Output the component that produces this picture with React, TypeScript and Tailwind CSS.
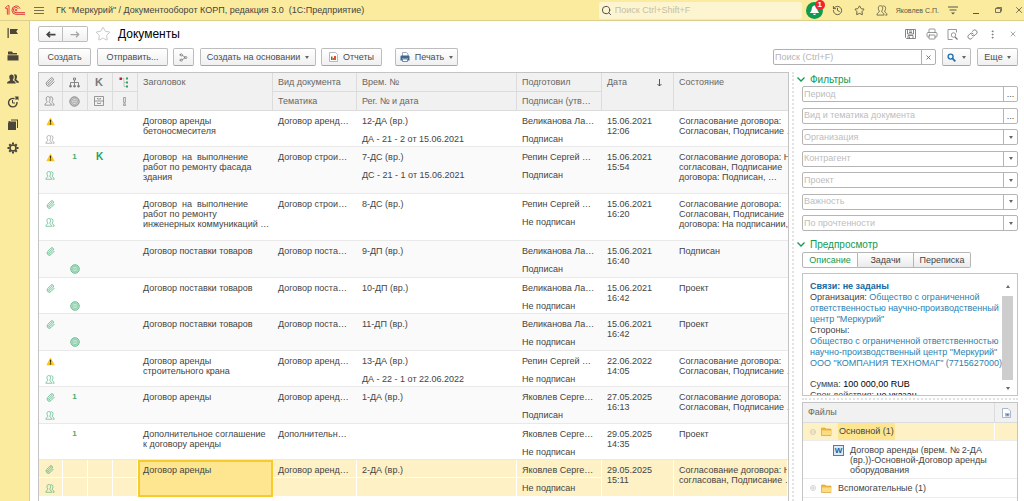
import React from 'react';
import clsx from 'clsx';
import { History, Link, MoreVertical, Paperclip, Printer, Search, Share2, Star, X } from 'lucide-react';

type Mark = 'warning' | 'clip' | 'people' | 'peopleGray' | 'seal' | 'one' | 'k';

interface DocumentRow {
  marks: [Mark?, Mark?, Mark?];
  subMarks: [Mark?, Mark?, Mark?];
  title: string[];
  kind: string;
  tempNumber?: string;
  regNumber?: string;
  author: string;
  signed: string;
  date: string;
  time: string;
  state: string[];
  tall?: boolean;
  selected?: boolean;
}

const documents: DocumentRow[] = [
  {
    marks: ['warning'],
    subMarks: ['peopleGray'],
    title: ['Договор аренды', 'бетоносмесителя'],
    kind: 'Договор аренд…',
    tempNumber: '12-ДА (вр.)',
    regNumber: 'ДА - 21 - 2 от 15.06.2021',
    author: 'Великанова Ла…',
    signed: 'Подписан',
    date: '15.06.2021',
    time: '12:06',
    state: ['Согласование договора:', 'Согласован, Подписание …'],
  },
  {
    marks: ['warning', 'one', 'k'],
    subMarks: ['people'],
    title: ['Договор  на  выполнение', 'работ по ремонту фасада', 'здания'],
    kind: 'Договор строи…',
    tempNumber: '7-ДС (вр.)',
    regNumber: 'ДС - 21 - 1 от 15.06.2021',
    author: 'Репин Сергей …',
    signed: 'Подписан',
    date: '15.06.2021',
    time: '15:54',
    state: ['Согласование договора: Не', 'согласован, Подписание', 'договора: Подписан, …'],
    tall: true,
  },
  {
    marks: ['clip'],
    subMarks: ['people'],
    title: ['Договор  на  выполнение', 'работ по ремонту', 'инженерных коммуникаций …'],
    kind: 'Договор строи…',
    tempNumber: '8-ДС (вр.)',
    author: 'Репин Сергей …',
    signed: 'Не подписан',
    date: '15.06.2021',
    time: '16:20',
    state: ['Согласование договора:', 'Согласован, Подписание', 'договора: На подписании, …'],
    tall: true,
  },
  {
    marks: ['clip'],
    subMarks: [undefined, 'seal'],
    title: ['Договор поставки товаров'],
    kind: 'Договор поста…',
    tempNumber: '9-ДП (вр.)',
    author: 'Великанова Ла…',
    signed: 'Подписан',
    date: '15.06.2021',
    time: '16:40',
    state: ['Подписан'],
  },
  {
    marks: ['clip'],
    subMarks: [undefined, 'seal'],
    title: ['Договор поставки товаров'],
    kind: 'Договор поста…',
    tempNumber: '10-ДП (вр.)',
    author: 'Великанова Ла…',
    signed: 'Не подписан',
    date: '15.06.2021',
    time: '16:42',
    state: ['Проект'],
  },
  {
    marks: ['clip'],
    subMarks: [undefined, 'seal'],
    title: ['Договор поставки товаров'],
    kind: 'Договор поста…',
    tempNumber: '11-ДП (вр.)',
    author: 'Великанова Ла…',
    signed: 'Не подписан',
    date: '15.06.2021',
    time: '16:42',
    state: ['Проект'],
  },
  {
    marks: ['warning'],
    subMarks: ['people'],
    title: ['Договор аренды', 'строительного крана'],
    kind: 'Договор аренд…',
    tempNumber: '13-ДА (вр.)',
    regNumber: 'ДА - 22 - 1 от 22.06.2022',
    author: 'Репин Сергей …',
    signed: 'Не подписан',
    date: '22.06.2022',
    time: '14:05',
    state: ['Согласование договора:', 'Согласован, Подписание …'],
  },
  {
    marks: ['clip', 'one'],
    subMarks: ['people'],
    title: ['Договор аренды'],
    kind: 'Договор аренд…',
    tempNumber: '1-ДА (вр.)',
    author: 'Яковлев Серге…',
    signed: 'Подписан',
    date: '27.05.2025',
    time: '16:13',
    state: ['Согласование договора:', 'Согласован, Подписание …'],
  },
  {
    marks: [undefined, 'one'],
    subMarks: [],
    title: ['Дополнительное соглашение', 'к договору аренды'],
    kind: 'Дополнительн…',
    author: 'Яковлев Серге…',
    signed: 'Не подписан',
    date: '29.05.2025',
    time: '14:35',
    state: ['Проект'],
  },
  {
    marks: ['clip'],
    subMarks: ['people'],
    title: ['Договор аренды'],
    kind: 'Договор аренд…',
    tempNumber: '2-ДА (вр.)',
    author: 'Яковлев Серге…',
    signed: 'Не подписан',
    date: '29.05.2025',
    time: '15:11',
    state: ['Согласование договора: Не', 'согласован, Подписание …'],
    selected: true,
  },
];

const textFilters = ['Период', 'Вид и тематика документа'];
const selectFilters = ['Организация', 'Контрагент', 'Проект', 'Важность', 'По прочтенности'];

const Logo = () => (
  <svg viewBox="0 0 60 30" className="h-[10px] w-5" fill="none" stroke="#d9232e" strokeWidth="2.600">
    <path d="M1 9 8 2h4v27M7 29V10H1" />
    <path d="M45 11A12.500 12.500 0 1 0 33 28h27" />
    <path d="M40 12A7.800 7.800 0 1 0 33 23h27" />
    <circle cx="33" cy="15.500" r="2.500" />
  </svg>
);

const People = ({ className }: { className?: string }) => (
  <svg viewBox="0 0 24 24" className={className} fill="none" stroke="currentColor" strokeWidth="1.700">
    <path d="M8.500 1.500c3 0 5 2 5 5.500 0 3-1 4.500-2 6v2c1 1.500 5 2 5 7H1c0-5 4-5.500 5-7v-2c-1.500-1.500-2-3-2-6 0-3.500 1.500-5.500 4.500-5.500z" />
    <path d="M13 2.500c4-1.500 7 .5 7 5 0 2.500-1 4-2 5.500v2c1 1.500 5 2 5 7h-4" />
  </svg>
);

const Seal = ({ className }: { className?: string }) => (
  <svg viewBox="0 0 20 20" className={className} fill="none" stroke="currentColor">
    <circle cx="10" cy="10" r="8.500" fill="currentColor" fillOpacity="0.3" strokeWidth="1.600" />
    <circle cx="10" cy="10" r="5.500" strokeWidth="0.800" fill="#fff" fillOpacity="0.3" />
    <path d="M6.500 8.500h7M6.500 11.500h7" strokeWidth="0.800" />
  </svg>
);

const Warning = () => (
  <svg viewBox="0 0 20 20" className="h-[9px] w-[9px]">
    <path d="M10 1 19.500 18.500H.5z" fill="#fcc720" />
    <path d="M8.500 6h3l-.5 7H9z" fill="#3c3000" />
    <rect x="8.500" y="14" width="3" height="3" fill="#3c3000" />
  </svg>
);

const Caret = () => (
  <svg viewBox="0 0 8 6" className="h-[3px] w-1 shrink-0" fill="#666">
    <path d="M0 0h8L4 6z" />
  </svg>
);

const Folder = () => (
  <svg viewBox="0 0 22 18" className="h-[9px] w-[11px] shrink-0">
    <path d="M1 2h7l2 2h10v13H1z" fill="#f0b93c" stroke="#c9932a" />
    <path d="M2 7h18v9H2z" fill="#fbdc80" />
  </svg>
);

const MarkIcon = ({ mark }: { mark?: Mark }) => {
  switch (mark) {
    case 'warning':
      return <Warning />;
    case 'clip':
      return <Paperclip className="h-[9px] w-[9px] text-[#3fae74]" />;
    case 'people':
      return <People className="h-[9px] w-[10px] text-[#3fae74]" />;
    case 'peopleGray':
      return <People className="h-[9px] w-[10px] text-[#909090]" />;
    case 'seal':
      return <Seal className="h-[10px] w-[10px] text-[#3fae74]" />;
    case 'one':
      return <span className="text-[8px] font-bold text-[#3fae74]">1</span>;
    case 'k':
      return <span className="text-[10px] font-bold text-[#1fa25d]">K</span>;
    default:
      return null;
  }
};

const sideItems = [
  {
    label: 'Главное',
    icon: <path d="M1 2h2.500v20H1zM6 4h16l-3.500 5 3.500 5H6z" />,
  },
  {
    label: 'Документы и файлы',
    icon: <path d="M2 3h8l2 3h8v3H2zM1 10.500h22V21H1z" />,
  },
  {
    label: 'Совместная работа',
    icon: (
      <path d="M9 3c3 0 4.500 2 4.500 5s-1.500 5-2 6c0 2 6 2 6 7H0c0-5 6.500-5 6.500-7-.5-1-2-3-2-6S6 3 9 3zM14 3c3-1 6 .5 6 4.500 0 2.500-1 4-1.500 5.500 0 2 5.500 2 5.500 6.500h-5c-.5-3-3-4-4.500-5C16 11 16 6 14 3z" />
    ),
  },
  {
    label: 'Учет времени',
    icon: (
      <>
        <path d="M15 5.500A8.500 8.500 0 1 0 20 12" fill="none" stroke="currentColor" strokeWidth="2.800" />
        <path d="M11 8v6h5" fill="none" stroke="currentColor" strokeWidth="2" />
        <path d="M15 1h8v8l-3-3-2 2-2-2 2-2z" />
      </>
    ),
  },
  {
    label: 'Справочники',
    icon: <path d="M8 1h14v17h-2V3H8zM5 5h13v17H2V8zM3 4h3L3 7z" />,
  },
  {
    label: 'Настройка',
    icon: (
      <>
        <circle cx="12" cy="12" r="6" fill="none" stroke="currentColor" strokeWidth="3.200" />
        <path d="M10 1h4v4h-4zM10 19h4v4h-4zM1 10h4v4H1zM19 10h4v4h-4zM3 6l3-3 2.500 2.500-3 3zM15.500 18.500l3-3L21 18l-3 3zM3 18l2.500-2.500 3 3L6 21zM15.500 5.500 18 3l3 3-2.500 2.500z" />
      </>
    ),
  },
];

const toolButton =
  'flex h-[18px] items-center justify-center rounded-[2px] border border-[#bdbdbd] border-b-[#a5a5a5] bg-linear-to-b from-white to-[#f0f0f0] text-[#4c4c4c]';

const headCell = 'border-r border-b border-[#dcdcdc] bg-[#f1f1f1] px-[5px] text-left font-normal text-[#666]';

const TopBar = () => (
  <header className="flex h-[21px] shrink-0 items-center border-b border-[#dccf8c] bg-[#fbeb9f] pl-[5px]">
    <Logo />
    <button type="button" aria-label="Меню" className="ml-[9px] flex w-[10px] flex-col gap-[2px]">
      <span className="h-px w-full bg-[#77704f]" />
      <span className="h-px w-full bg-[#77704f]" />
      <span className="h-px w-full bg-[#77704f]" />
    </button>
    <span className="ml-3 flex-1 whitespace-pre">
      ГК "Меркурий" / Документооборот КОРП, редакция 3.0  (1С:Предприятие)
    </span>
    <label className="flex h-[17px] w-[203px] items-center gap-[3px] rounded-[2px] bg-[#fdf5cf] pl-[2px]">
      <Search className="h-[11px] w-[11px] text-[#444]" />
      <input
        type="search"
        aria-label="Поиск"
        placeholder="Поиск Ctrl+Shift+F"
        className="min-w-0 flex-1 bg-transparent outline-none placeholder:text-[#c4bfa8]"
      />
    </label>
    <div className="flex items-center pl-1 text-[#5c5743]">
      <button type="button" aria-label="Уведомления" className="relative flex h-[17px] w-[17px] items-center justify-center rounded-full bg-[#109a4e]">
        <svg viewBox="0 0 20 20" className="h-[11px] w-[11px]" fill="#fff">
          <path d="M10 1c3 0 4.500 2.500 5 6 .5 4 1.500 5 3.500 7.500h-17C3.500 12 4.500 11 5 7c.5-3.500 2-6 5-6zM7.500 16h5c0 3-5 3-5 0z" />
        </svg>
        <span className="absolute -top-[2px] -right-[2px] flex h-[10px] w-[10px] items-center justify-center rounded-full bg-[#f5222d] text-[8px] font-bold text-white">
          1
        </span>
      </button>
      <button type="button" aria-label="История" className="ml-[9px]">
        <History className="h-[11px] w-[11px]" />
      </button>
      <button type="button" aria-label="Избранное" className="ml-[11px]">
        <Star className="h-[11px] w-[11px]" />
      </button>
      <button type="button" aria-label="Пользователи" className="ml-[11px]">
        <People className="h-[11px] w-[12px]" />
      </button>
      <span className="ml-2 text-[7px]">Яковлев С.П.</span>
      <button type="button" aria-label="Сервис" className="ml-[9px]">
        <svg viewBox="0 0 20 18" className="h-[9px] w-[10px]" fill="currentColor">
          <path d="M0 1h20v2H0zM3 7h14v2H3zM6 13h8l-4 4z" />
        </svg>
      </button>
      <button type="button" aria-label="Свернуть" className="ml-[15px] h-[7px] w-[6px] border-b border-[#5c5743]" />
      <button type="button" aria-label="Развернуть" className="ml-4">
        <svg viewBox="0 0 14 12" className="h-[6px] w-[7px]" fill="none" stroke="currentColor" strokeWidth="1.600">
          <path d="M1 3h10v8H1zM3 1h10v8" />
        </svg>
      </button>
      <button type="button" aria-label="Закрыть окно" className="ml-3">
        <X className="h-[10px] w-[10px]" />
      </button>
    </div>
  </header>
);

const SideBar = () => (
  <nav className="flex w-[30px] shrink-0 flex-col items-center gap-[11px] border-r border-[#dccf8c] bg-[#fbeb9f] pr-[3px] pt-[6px] text-[#4a463a]">
    {sideItems.map((item) => (
      <button key={item.label} type="button" aria-label={item.label}>
        <svg viewBox="0 0 24 24" className="h-3 w-3" fill="currentColor">
          {item.icon}
        </svg>
      </button>
    ))}
  </nav>
);

const navButton = 'flex w-[25px] items-center justify-center border border-[#bdbdbd] bg-linear-to-b from-white to-[#f0f0f0]';

const TitleRow = () => (
  <div className="flex h-4 items-center">
    <div className="flex h-4">
      <button type="button" aria-label="Назад" className={clsx(navButton, 'rounded-l-[2px] text-[#444]')}>
        <svg viewBox="0 0 20 14" className="h-[7px] w-[10px]" fill="none" stroke="currentColor" strokeWidth="3.500">
          <path d="M19 7H3M8 1.500 2.500 7 8 12.500" />
        </svg>
      </button>
      <button type="button" aria-label="Вперед" className={clsx(navButton, 'rounded-r-[2px] border-l-0 text-[#a5a5a5]')}>
        <svg viewBox="0 0 20 14" className="h-[7px] w-[10px]" fill="none" stroke="currentColor" strokeWidth="2.500">
          <path d="M1 7h16M12 1.500 17.500 7 12 12.500" />
        </svg>
      </button>
    </div>
    <button type="button" aria-label="В избранное" className="ml-[7px]">
      <Star className="h-4 w-4 stroke-1 text-[#aaa]" />
    </button>
    <h1 className="ml-[7px] flex-1 text-[12px] text-black">Документы</h1>
    <div className="flex items-center text-[#777]">
      <button type="button" aria-label="Сохранить">
        <svg viewBox="0 0 22 20" className="h-[10px] w-[11px]" fill="none" stroke="currentColor" strokeWidth="1.800">
          <path d="M1 1h20v18H3l-2-2zM5 1v9h12V1M6 19v-6h10v6M8 4h6M8 7h6M9 15v3" />
        </svg>
      </button>
      <button type="button" aria-label="Печать" className="ml-[10px]">
        <Printer className="h-3 w-3 stroke-[1.5]" />
      </button>
      <button type="button" aria-label="Просмотр" className="ml-[9px]">
        <svg viewBox="0 0 22 22" className="h-[11px] w-[11px]" fill="none" stroke="currentColor" strokeWidth="1.500">
          <path d="M19 7V1H2v20h9" />
          <circle cx="13" cy="12" r="4.500" />
          <path d="m16 16 5 5" strokeWidth="2.500" />
        </svg>
      </button>
      <button type="button" aria-label="Ссылка" className="ml-[9px]">
        <Link className="h-[11px] w-[11px]" />
      </button>
      <button type="button" aria-label="Еще действия" className="ml-[9px]">
        <MoreVertical className="h-[11px] w-[11px]" />
      </button>
      <button type="button" aria-label="Закрыть" className="ml-[11px] mr-[7px]">
        <X className="h-2 w-2" />
      </button>
    </div>
  </div>
);

const Toolbar = () => (
  <div className="mt-[6px] flex items-center pr-[6px]">
    <button type="button" className={clsx(toolButton, 'w-[53px]')}>Создать</button>
    <button type="button" className={clsx(toolButton, 'ml-[6px] w-[71px]')}>Отправить...</button>
    <button type="button" aria-label="Поделиться" className={clsx(toolButton, 'ml-[5px] w-[21px]')}>
      <Share2 className="h-[9px] w-[9px] -scale-x-100 text-[#777]" />
    </button>
    <button type="button" className={clsx(toolButton, 'ml-[6px] w-[116px] gap-[5px]')}>
      Создать на основании <Caret />
    </button>
    <button type="button" className={clsx(toolButton, 'ml-[5px] w-[61px] gap-[5px]')}>
      <svg viewBox="0 0 18 20" className="h-[10px] w-[9px]">
        <path d="M1 1h12l4 4v14H1z" fill="#fff" stroke="#9aa3ad" strokeWidth="1.500" />
        <path d="M4 9h3v7H4z" fill="#d33" />
        <path d="M7 12h3v4H7z" fill="#36a853" />
        <path d="M10 8h4v8h-4z" fill="#e2512b" />
      </svg>
      Отчеты
    </button>
    <button type="button" className={clsx(toolButton, 'ml-[13px] w-[63px] gap-[5px]')}>
      <svg viewBox="0 0 20 20" className="h-[10px] w-[10px]">
        <path d="M5 1h8l3 3v6H5z" fill="#fff" stroke="#7d8fa5" strokeWidth="1.500" />
        <path d="M1 9q0-2 2-2h14q2 0 2 2v8h-3v-4H4v4H1z" fill="#3f6790" />
        <path d="M5 14h10v5H5z" fill="#fff" stroke="#3f6790" strokeWidth="1.500" />
      </svg>
      Печать <Caret />
    </button>
    <div className="ml-auto flex h-4 w-[163px] rounded-[2px] border border-[#b0b0b0]">
      <input
        type="text"
        aria-label="Поиск по списку"
        placeholder="Поиск (Ctrl+F)"
        className="min-w-0 flex-1 px-px outline-none placeholder:text-[#b5b5b5]"
      />
      <button type="button" aria-label="Очистить" className="flex w-[14px] items-center justify-center border-l border-[#b0b0b0]">
        <X className="h-[7px] w-[7px] stroke-3 text-[#666]" />
      </button>
    </div>
    <button type="button" aria-label="Найти" className={clsx(toolButton, 'ml-[6px] w-[29px] gap-[6px]')}>
      <svg viewBox="0 0 20 20" className="h-[9px] w-[9px]" fill="none" stroke="#1f72b4">
        <circle cx="8" cy="8" r="5.500" strokeWidth="3" />
        <path d="m12 12 6.500 6.500" strokeWidth="4" />
      </svg>
      <Caret />
    </button>
    <button type="button" className={clsx(toolButton, 'ml-[6px] w-[41px] gap-1')}>
      Еще <Caret />
    </button>
  </div>
);

const IconHead = ({ label, children }: { label: string; children: React.ReactNode }) => (
  <th aria-label={label} className="border-r border-b border-[#dcdcdc] bg-[#f1f1f1] p-0 text-[#7a7a7a]">
    <div className="flex items-center justify-center pr-[2px]">{children}</div>
  </th>
);

const TwoLines = ({ top, bottom, divided }: { top?: React.ReactNode; bottom?: React.ReactNode; divided?: boolean }) => (
  <>
    <div className={clsx('h-[18px] overflow-hidden px-[5px] pt-[5px]', divided && 'border-b border-white')}>{top}</div>
    <div className="h-[16px] px-[5px] pt-[5px]">{bottom}</div>
  </>
);

const DocumentsTable = () => (
  <div className="min-w-0 flex-1 overflow-hidden border border-b-0 border-[#c4c4c4]">
    <table className="w-full table-fixed border-separate border-spacing-0 text-[#444]">
      <colgroup>
        <col className="w-[24px]" />
        <col className="w-[25px]" />
        <col className="w-[25px]" />
        <col className="w-[25px]" />
        <col className="w-[135px]" />
        <col className="w-[84px]" />
        <col className="w-[160px]" />
        <col className="w-[85px]" />
        <col className="w-[72px]" />
        <col />
      </colgroup>
      <thead>
        <tr className="h-[19px]">
          <IconHead label="Файлы">
            <Paperclip className="h-[10px] w-[10px]" />
          </IconHead>
          <IconHead label="Процессы">
            <svg viewBox="0 0 22 22" className="h-[11px] w-[11px]" fill="none" stroke="currentColor" strokeWidth="1.800">
              <path d="M9 2h4v4H9zM11 6v10M3 16v-5h16v5" />
              <path d="M1.500 17h3v3h-3zM9.500 17h3v3h-3zM17.500 17h3v3h-3z" fill="currentColor" />
            </svg>
          </IconHead>
          <IconHead label="Контроль">
            <span className="text-[11px]">K</span>
          </IconHead>
          <IconHead label="Связи">
            <svg viewBox="0 0 20 22" className="h-[11px] w-[10px]">
              <path d="M4 3h6v16h4M10 11h4" fill="none" stroke="#999" />
              <path d="M1 1h5v5H1z" fill="#c0203a" />
              <path d="M14 1h4v4h-4zM14 9h4v4h-4zM14 17h4v4h-4z" fill="#2ea35c" />
            </svg>
          </IconHead>
          <th rowSpan={2} className={clsx(headCell, 'align-top pt-1')}>Заголовок</th>
          <th className={headCell}>Вид документа</th>
          <th className={headCell}>Врем. №</th>
          <th className={headCell}>Подготовил</th>
          <th rowSpan={2} className={clsx(headCell, 'align-top pt-1')}>
            <span className="flex items-center justify-between pr-[6px]">
              Дата
              <svg viewBox="0 0 10 16" className="h-2 w-[5px]" fill="none" stroke="#444" strokeWidth="1.800">
                <path d="M5 0v14M1 10l4 4 4-4" />
              </svg>
            </span>
          </th>
          <th rowSpan={2} className={clsx(headCell, 'border-r-0 align-top pt-1')}>Состояние</th>
        </tr>
        <tr className="h-[19px]">
          <IconHead label="Участники">
            <People className="h-[10px] w-[11px]" />
          </IconHead>
          <IconHead label="Подпись">
            <Seal className="h-[11px] w-[11px]" />
          </IconHead>
          <IconHead label="Хранение">
            <svg viewBox="0 0 20 20" className="h-[10px] w-[10px]" fill="none" stroke="currentColor" strokeWidth="1.500">
              <path d="M1 1h18v18H1zM1 10h18M7 4v2h6V4M7 13v2h6v-2" />
            </svg>
          </IconHead>
          <IconHead label="Важность">
            <svg viewBox="0 0 6 20" className="h-[9px] w-[3px]" fill="none" stroke="currentColor" strokeWidth="1.500">
              <path d="M1 1h4v11H1zM1 15h4v4H1z" />
            </svg>
          </IconHead>
          <th className={headCell}>Тематика</th>
          <th className={headCell}>Рег. № и дата</th>
          <th className={headCell}>Подписан (утв…</th>
        </tr>
      </thead>
      <tbody>
        {documents.map((doc, index) => {
          const cell = clsx(
            'overflow-hidden border-b p-0 align-top leading-[10px] whitespace-pre',
            doc.selected ? 'border-r border-white bg-[#fdf1c5]' : 'border-[#e9e9e9]',
            !doc.selected && index % 2 === 1 && 'bg-[#fafafa]',
          );
          return (
            <tr key={index} className={doc.tall ? 'h-[47px]' : index % 2 === 1 ? 'h-[37px]' : 'h-[36px]'}>
              {[0, 1, 2, 3].map((col) => (
                <td key={col} className={cell}>
                  <div className={clsx('flex h-[18px] items-center justify-center pt-[2px] pr-[2px]', doc.selected && 'border-b border-white')}>
                    <MarkIcon mark={doc.marks[col]} />
                  </div>
                  <div className="flex h-[17px] items-center justify-center pt-[3px] pr-[2px]">
                    <MarkIcon mark={doc.subMarks[col]} />
                  </div>
                </td>
              ))}
              <td
                className={clsx(
                  cell,
                  doc.selected && 'bg-[#fee590] outline-2 -outline-offset-2 outline-[#f8cb2c]',
                )}
              >
                <div className="px-[5px] pt-[5px]">{doc.title.join('\n')}</div>
              </td>
              <td className={cell}>
                <TwoLines top={doc.kind} divided={doc.selected} />
              </td>
              <td className={cell}>
                <TwoLines top={doc.tempNumber} bottom={doc.regNumber} divided={doc.selected} />
              </td>
              <td className={cell}>
                <TwoLines top={doc.author} bottom={doc.signed} divided={doc.selected} />
              </td>
              <td className={cell}>
                <div className="px-[5px] pt-[5px]">{doc.date + '\n' + doc.time}</div>
              </td>
              <td className={cell}>
                <div className="pt-[5px] pl-[5px]">{doc.state.join('\n')}</div>
              </td>
            </tr>
          );
        })}
      </tbody>
    </table>
  </div>
);

const SectionTitle = ({ children }: { children: React.ReactNode }) => (
  <h2 className="flex h-[14px] items-center gap-[5px] text-[10px] text-[#109a4e]">
    <svg viewBox="0 0 16 10" className="h-[5px] w-2" fill="none" stroke="currentColor" strokeWidth="2.500">
      <path d="m1 1 7 7 7-7" />
    </svg>
    {children}
  </h2>
);

const Filters = () => (
  <div className="ml-[5px] flex h-[145px] flex-col justify-between">
    {textFilters.map((name) => (
      <div key={name} className="flex h-4 rounded-[2px] border border-[#b5b5b5]">
        <input
          type="text"
          aria-label={name}
          placeholder={name}
          className="min-w-0 flex-1 px-px outline-none placeholder:text-[#bdbdbd]"
        />
        <button type="button" aria-label={'Выбрать: ' + name} className="w-[14px] border-l border-[#b5b5b5] leading-[10px]">
          ...
        </button>
      </div>
    ))}
    {selectFilters.map((name) => (
      <div key={name} className="relative h-4">
        <select
          aria-label={name}
          className="h-full w-full appearance-none rounded-[2px] border border-[#b5b5b5] bg-white pr-4 pl-px text-[#bdbdbd] outline-none"
        >
          <option>{name}</option>
        </select>
        <span className="pointer-events-none absolute inset-y-0 right-0 flex w-[15px] items-center justify-center border-l border-[#b5b5b5]">
          <Caret />
        </span>
      </div>
    ))}
  </div>
);

const tab = 'h-4 border border-[#b5b5b5]';

const Preview = () => (
  <div className="mt-[5px] ml-[5px] flex h-[123px] border border-[#c4c4c4]">
    <div className="min-w-0 flex-1 overflow-hidden pt-[7px] pl-[7px] leading-[11px] whitespace-nowrap">
      <a href="#links" className="font-bold text-[#15699f]">Связи: не заданы</a>
      <p>
        Организация:{' '}
        <a href="#org" className="text-[#2b7fb0]">
          Общество с ограниченной
          <br />
          ответственностью научно-производственный
          <br />
          центр "Меркурий"
        </a>
      </p>
      <p>Стороны:</p>
      <p>
        <a href="#org" className="text-[#2b7fb0]">
          Общество с ограниченной ответственностью
          <br />
          научно-производственный центр "Меркурий"
        </a>
      </p>
      <p>
        <a href="#partner" className="text-[#2b7fb0]">ООО "КОМПАНИЯ ТЕХНОМАГ" (7715627000)</a>
      </p>
      <p className="mt-[10px]">
        Сумма: <span className="text-black">100 000,00 RUB</span>
      </p>
      <p>
        Срок действия: <span className="text-black">не указан</span>
      </p>
    </div>
    <div className="mr-1 flex w-[11px] flex-col items-center justify-between py-[5px]">
      <svg viewBox="0 0 8 6" className="mt-[6px] h-[3px] w-1" fill="#666">
        <path d="M0 6h8L4 0z" />
      </svg>
      <span className="h-[84px] w-[11px] bg-[#cdcdcd]" />
      <Caret />
    </div>
  </div>
);

const Toggle = ({ open }: { open?: boolean }) => (
  <svg viewBox="0 0 12 12" className="h-[6px] w-[6px] shrink-0" fill="none" stroke="#aaa">
    <circle cx="6" cy="6" r="5" />
    <path d="M3 6h6" />
    {!open && <path d="M6 3v6" />}
  </svg>
);

const Files = () => (
  <div className="ml-[5px] flex-1 border border-b-0 border-[#c4c4c4]">
    <div className="flex h-[20px] items-center border-b border-[#dcdcdc] bg-[#f1f1f1] pl-[5px] text-[#666]">
      <span className="flex-1">Файлы</span>
      <span className="flex h-full w-[23px] items-center justify-center border-l border-[#dcdcdc]">
        <svg viewBox="0 0 18 20" className="h-[10px] w-[9px]">
          <path d="M1 1h11l5 5v13H1z" fill="#fff" stroke="#8fa3bd" strokeWidth="1.500" />
          <path d="M6 10h9v7H6z" fill="#a9b8d6" />
          <path d="M9 12h4v3H9z" fill="#5b74ab" />
        </svg>
      </span>
    </div>
    <div className="flex h-[18px] border-b border-[#ececec] bg-[#fdf1c5]">
      <div className="flex flex-1 items-center pl-[7px]">
        <Toggle open />
        <span className="ml-[5px] flex">
          <Folder />
        </span>
        <span className="ml-[6px] flex h-[17px] items-center bg-[#fee590] px-px">Основной (1)</span>
      </div>
      <span className="w-[23px] border-l border-white" />
    </div>
    <div className="flex h-[38px] gap-[6px] border-b border-[#ececec] pt-1 pl-[30px]">
      <span className="flex h-[11px] w-[11px] shrink-0 items-center justify-center border border-[#3f83bd] bg-[#dcebf7] text-[8px] font-bold text-[#1b5f9e]">
        W
      </span>
      <span className="leading-[10px]">
        Договор аренды (врем. № 2-ДА
        <br />
        (вр.))-Основной-Договор аренды
        <br />
        оборудования
      </span>
    </div>
    <div className="flex h-[19px] items-center border-b border-[#ececec] pl-[7px]">
      <Toggle />
      <span className="ml-[5px] flex">
        <Folder />
      </span>
      <span className="ml-[6px]">Вспомогательные (1)</span>
    </div>
  </div>
);

export default function App() {
  return (
    <div className="flex h-screen flex-col overflow-hidden bg-white font-['Liberation_Sans',Arial,sans-serif] text-[9px] leading-[11px] text-[#444]">
      <TopBar />
      <div className="flex min-h-0 flex-1">
        <SideBar />
        <main className="flex min-w-0 flex-1 flex-col pt-[5px] pl-2">
          <TitleRow />
          <Toolbar />
          <div className="mt-[6px] flex min-h-0 flex-1">
            <DocumentsTable />
            <div className="mx-[3px] border-l-2 border-dotted border-[#e3e3e3]" />
            <aside className="flex w-[221px] shrink-0 flex-col">
              <SectionTitle>Фильтры</SectionTitle>
              <Filters />
              <div className="mt-[6px]">
                <SectionTitle>Предпросмотр</SectionTitle>
              </div>
              <div role="tablist" className="mt-px ml-[5px] flex">
                <button type="button" role="tab" aria-selected="true" className={clsx(tab, 'w-[56px] rounded-l-[2px] text-[#109a4e]')}>
                  Описание
                </button>
                <button type="button" role="tab" aria-selected="false" className={clsx(tab, 'w-[56px] border-l-0 bg-linear-to-b from-white to-[#ebebeb]')}>
                  Задачи
                </button>
                <button type="button" role="tab" aria-selected="false" className={clsx(tab, 'w-[57px] rounded-r-[2px] border-l-0 bg-linear-to-b from-white to-[#ebebeb]')}>
                  Переписка
                </button>
              </div>
              <Preview />
              <div className="my-[2px] ml-[5px] border-t-2 border-dotted border-[#e3e3e3]" />
              <Files />
            </aside>
            <div className="w-[6px] shrink-0" />
          </div>
        </main>
      </div>
    </div>
  );
}
